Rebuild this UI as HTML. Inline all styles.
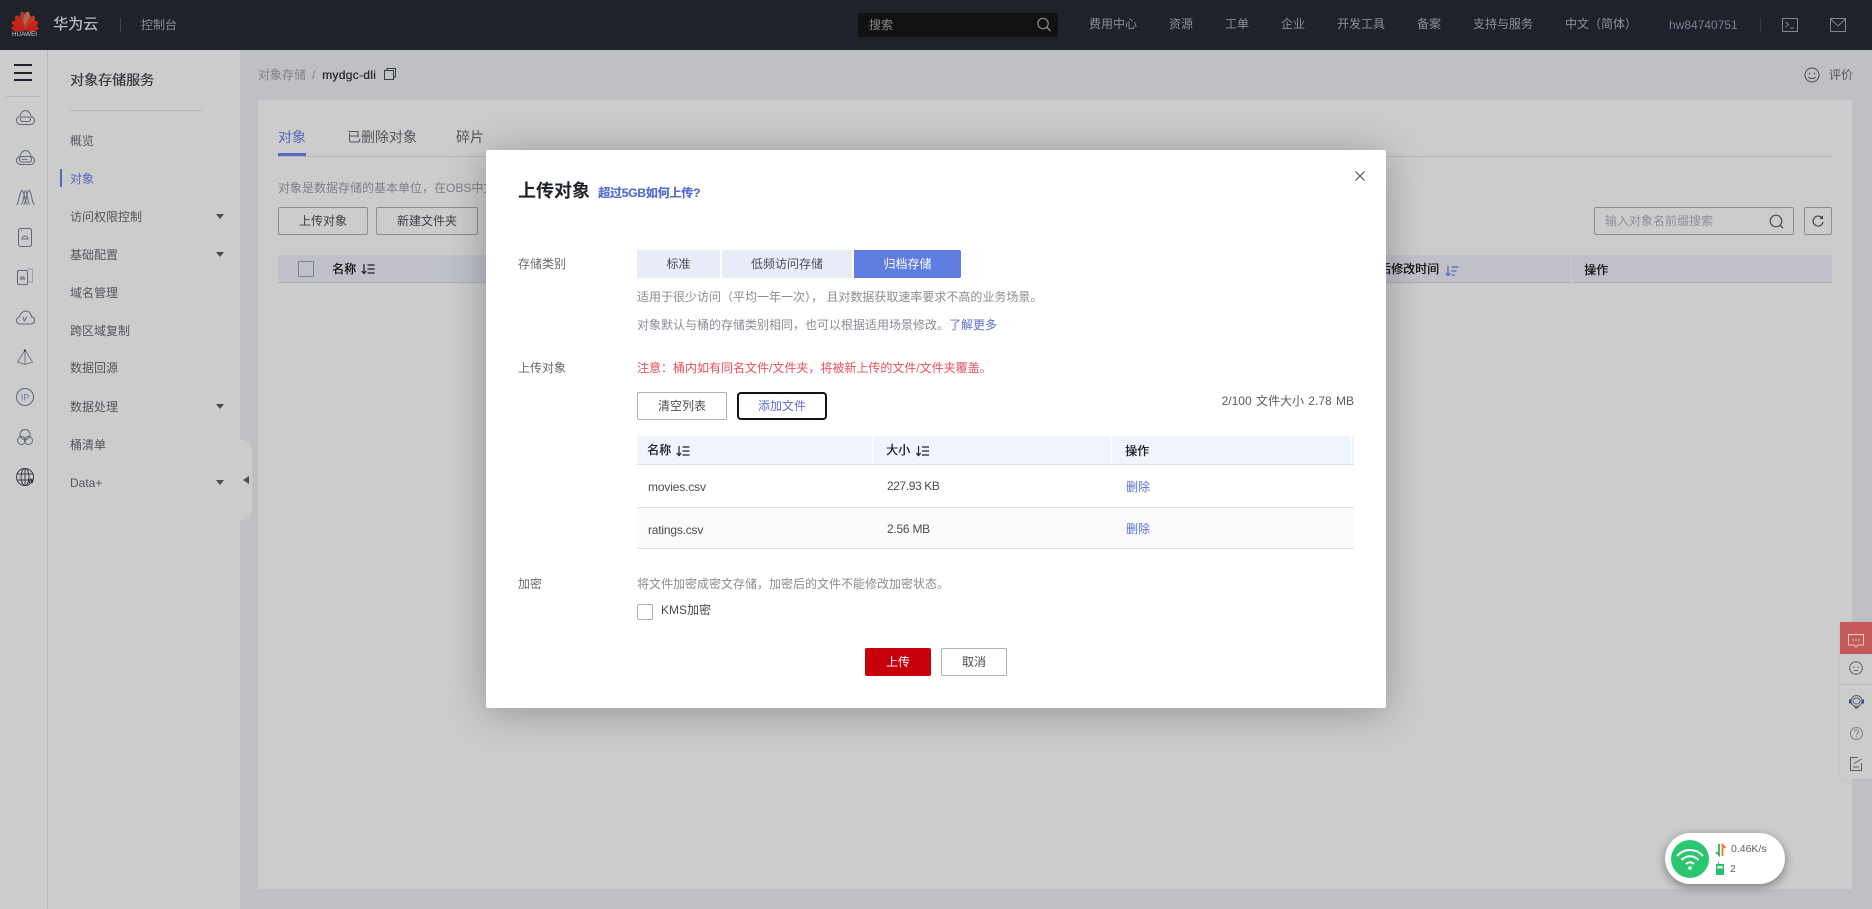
<!DOCTYPE html>
<html lang="zh-CN">
<head>
<meta charset="utf-8">
<title>对象存储服务</title>
<style>
html,body{margin:0;padding:0}
body{width:1872px;height:909px;overflow:hidden;position:relative;background:#bfc0c4;font-family:"Liberation Sans","Noto Sans CJK SC",sans-serif;font-size:12px;color:#4a4c52}
.a{position:absolute}
.t{position:absolute;line-height:20px;height:20px;white-space:nowrap}
.n{color:#8d8f96}
.m{color:#54565d}
.md{text-shadow:.35px 0 0 currentColor}
.b{position:absolute;box-sizing:border-box;border:1px solid #8c8d92;text-align:center;border-radius:2px;white-space:nowrap}
svg{position:absolute;overflow:visible}
.ic{fill:none;stroke:#62667a;stroke-width:1}
.bl{color:#5a6fd2}
</style>
</head>
<body>
<svg width="0" height="0" style="position:absolute">
<symbol id="sort" viewBox="0 0 14 12"><path d="M3 1v9M.8 8l2.2 2.6L5.200 8M6.500 2h7M6.500 6h7M6.500 10h7" fill="none" stroke="currentColor" stroke-width="1.200"/></symbol>
<symbol id="pt" viewBox="-5 -20 10 20" overflow="visible"><path d="M0 0C-3.500-5-4.500-12-1.800-18-.6-19 .6-19 1.800-18 4.500-12 3.500-5 0 0z"/></symbol>
</svg>

<!-- top bar -->
<div class="a" style="left:0;top:0;width:1872px;height:50px;background:#1f222b"></div>
<svg style="left:12px;top:10px" width="26" height="21" viewBox="0 0 26 21">
<g transform="translate(13 20)">
<path fill="#a93a2e" transform="rotate(-9) scale(1 1)" d="M0 0C-3.500-5-4.500-12-1.800-17.500-.6-19 .6-19 1.800-17.500 4.500-12 3.500-5 0 0z"/>
<path fill="#b0664f" transform="rotate(9)" d="M0 0C-3.500-5-4.500-12-1.800-17.500-.6-19 .6-19 1.800-17.500 4.500-12 3.500-5 0 0z"/>
<path fill="#c02a1e" transform="rotate(-33)" d="M0 0C-3.300-4.500-4.200-11-1.800-16-.6-17 .6-17 1.800-16 4.200-11 3.300-4.500 0 0z"/>
<path fill="#c23a26" transform="rotate(33)" d="M0 0C-3.300-4.500-4.200-11-1.800-16-.6-17 .6-17 1.800-16 4.200-11 3.300-4.500 0 0z"/>
<path fill="#c4261c" transform="rotate(-57)" d="M0 0C-3-4-3.800-10-1.800-14.500-.6-15.500 .6-15.500 1.800-14.500 3.800-10 3-4 0 0z"/>
<path fill="#c4261c" transform="rotate(57)" d="M0 0C-3-4-3.800-10-1.800-14.500-.6-15.500 .6-15.500 1.800-14.500 3.800-10 3-4 0 0z"/>
<path fill="#c0221a" transform="rotate(-82)" d="M0 0C-2.500-3.500-3.300-9-1.600-13-.6-14 .6-14 1.600-13 3.300-9 2.500-3.500 0 0z"/>
<path fill="#c0221a" transform="rotate(82)" d="M0 0C-2.500-3.500-3.300-9-1.600-13-.6-14 .6-14 1.600-13 3.300-9 2.500-3.500 0 0z"/>
</g></svg>
<div class="t" style="left:12px;top:25px;font-size:6.300px;color:#d0d1d3">HUAWEI</div>
<div class="t md" style="left:53px;top:15px;font-size:15px;color:#b9babd">华为云</div>
<div class="a" style="left:120px;top:18px;width:1px;height:14px;background:#3f424c"></div>
<div class="t n" style="left:141px;top:15px">控制台</div>
<div class="a" style="left:858px;top:13px;width:200px;height:24px;background:#111112;border-radius:2px"></div>
<div class="t" style="left:869px;top:15px;color:#8c8c8c">搜索</div>
<svg style="left:1036px;top:17px" width="16" height="15"><circle cx="7" cy="6.500" r="5.200" fill="none" stroke="#8c8c8c" stroke-width="1.200"/><path d="M11 10.500l3.500 3.500" stroke="#8c8c8c" stroke-width="1.400"/></svg>
<div class="t n" style="left:1089px;top:14px">费用中心</div>
<div class="t n" style="left:1169px;top:14px">资源</div>
<div class="t n" style="left:1225px;top:14px">工单</div>
<div class="t n" style="left:1281px;top:14px">企业</div>
<div class="t n" style="left:1337px;top:14px">开发工具</div>
<div class="t n" style="left:1417px;top:14px">备案</div>
<div class="t n" style="left:1473px;top:14px">支持与服务</div>
<div class="t n" style="left:1565px;top:14px">中文（简体）</div>
<div class="t" style="left:1669px;top:15px;color:#7a7f8f">hw84740751</div>
<div class="a" style="left:1760px;top:18px;width:1px;height:14px;background:#35383f"></div>
<svg style="left:1782px;top:18px" width="16" height="14"><rect x=".5" y=".5" width="15" height="13" fill="none" stroke="#85878e"/><path d="M3.500 4l3 2.500-3 2.500M8 10h4" fill="none" stroke="#85878e"/></svg>
<svg style="left:1830px;top:18px" width="16" height="14"><rect x=".5" y=".5" width="15" height="13" fill="none" stroke="#85878e"/><path d="M.5 1l7.500 7 7.500-7" fill="none" stroke="#85878e"/></svg>

<!-- rail + menu -->
<div class="a" style="left:0;top:50px;width:240px;height:859px;background:#cccccc"></div>
<div class="a" style="left:47px;top:50px;width:1px;height:859px;background:#bababa"></div>
<div class="a" style="left:14px;top:64px;width:18px;height:2px;background:#1f222e"></div>
<div class="a" style="left:14px;top:72px;width:18px;height:2px;background:#1f222e"></div>
<div class="a" style="left:14px;top:79px;width:18px;height:2px;background:#1f222e"></div>
<div class="a" style="left:6px;top:96px;width:35px;height:1px;background:#b8b8b8"></div>

<svg class="ic" style="left:16px;top:110px" width="19" height="15"><path d="M4.500 14.500C2 14.500.5 12.500.5 10.500.5 8.500 2 7 4 6.500 4.500 3 7 .5 9.500.5S14.500 3 15 6.500c2 .5 3.500 2 3.500 4s-1.500 4-4 4z"/><rect x="4.500" y="7" width="10" height="4.500" rx="2.200"/></svg>
<svg class="ic" style="left:16px;top:150px" width="19" height="15"><path d="M4.500 14.500C2 14.500.5 12.500.5 10.500.5 8.500 2 7 4 6.500 4.500 3 7 .5 9.500.5S14.500 3 15 6.500c2 .5 3.500 2 3.500 4s-1.500 4-4 4z"/><rect x="3.500" y="6.500" width="12" height="5.500" rx="2"/><path d="M5.500 9.300h6"/></svg>
<svg class="ic" style="left:16px;top:190px" width="19" height="15"><path d="M.5 14.500C3 14.500 3.500 .5 6 .5s3 14 5.500 14M5 14.500C7.500 14.500 8 .5 9.500 .5s2 14 4.500 14M7.500 14.500C10 14.500 10.500 .5 13 .5s3 14 5.500 14"/></svg>
<svg class="ic" style="left:18px;top:228px" width="14" height="19"><rect x=".5" y=".5" width="13" height="18" rx="2"/><path d="M4 11c0-2 1.500-3 3-3s3 1 3 3zM3 2.500h1"/></svg>
<svg class="ic" style="left:17px;top:268px" width="16" height="17"><rect x=".5" y="2.500" width="10" height="14" rx="1"/><path d="M10.500 1H15.500V14H10.500" stroke="#9a9ca6"/><path d="M3.500 11c0-1.500 1-2 2-2s2 .5 2 2z"/></svg>
<svg class="ic" style="left:16px;top:310px" width="19" height="15"><path d="M4 14C1 14 .5 11.500.5 10.500c0-2 1.500-3.500 3-3.500C4 3.500 7 1 10 1s5 2.500 5.500 6c2 0 3 1.500 3 3.500S17 14 15 14z"/><path d="M7 7l1.200 4 2.800-4.500"/></svg>
<svg class="ic" style="left:17px;top:349px;stroke:#7a7c88" width="16" height="16"><path d="M8 1L.5 13 8 15.500 15.500 13zM8 1v14.500"/><circle cx="8" cy="1.500" r="1" fill="#222" stroke="none"/></svg>
<svg class="ic" style="left:16px;top:388px" width="18" height="18"><circle cx="9" cy="9" r="8.500"/><text x="9" y="12.500" font-size="9" text-anchor="middle" stroke="none" fill="#6a7ab0" font-family="Liberation Sans">IP</text></svg>
<svg class="ic" style="left:17px;top:429px" width="16" height="16"><circle cx="8" cy="5.500" r="5"/><circle cx="4.500" cy="11.500" r="4"/><circle cx="11.500" cy="11.500" r="4"/></svg>
<svg class="ic" style="left:16px;top:468px;stroke:#3c3f4a" width="18" height="18"><circle cx="9" cy="9" r="8.500"/><ellipse cx="9" cy="9" rx="4" ry="8.500"/><path d="M.5 6h17M.5 12h17M9 .5v17"/></svg>
<div class="t" style="left:28px;top:472px;font-size:6px;color:#22242c;font-weight:700">W</div>

<div class="t md" style="left:70px;top:70px;font-size:14px;color:#3a3c42">对象存储服务</div>
<div class="a" style="left:70px;top:110px;width:132px;height:1px;background:#b8b8b8"></div>
<div class="t m" style="left:70px;top:131px">概览</div>
<div class="a" style="left:60px;top:169px;width:2px;height:18px;background:#5468bd"></div>
<div class="t" style="left:70px;top:169px;color:#5468bd">对象</div>
<div class="t m" style="left:70px;top:207px">访问权限控制</div>
<div class="t m" style="left:70px;top:245px">基础配置</div>
<div class="t m" style="left:70px;top:283px">域名管理</div>
<div class="t m" style="left:70px;top:321px">跨区域复制</div>
<div class="t m" style="left:70px;top:358px">数据回源</div>
<div class="t m" style="left:70px;top:397px">数据处理</div>
<div class="t m" style="left:70px;top:435px">桶清单</div>
<div class="t m" style="left:70px;top:473px">Data+</div>
<svg style="left:216px;top:214px" width="8" height="5"><path d="M0 0h8L4 5z" fill="#4a4c55"/></svg>
<svg style="left:216px;top:252px" width="8" height="5"><path d="M0 0h8L4 5z" fill="#4a4c55"/></svg>
<svg style="left:216px;top:404px" width="8" height="5"><path d="M0 0h8L4 5z" fill="#4a4c55"/></svg>
<svg style="left:216px;top:480px" width="8" height="5"><path d="M0 0h8L4 5z" fill="#4a4c55"/></svg>
<div class="a" style="left:240px;top:440px;width:12px;height:80px;background:#cccccc;border-radius:0 10px 10px 0"></div>
<svg style="left:243px;top:476px" width="6" height="8"><path d="M6 0v8L0 4z" fill="#4a4c55"/></svg>

<!-- breadcrumb -->
<div class="t n" style="left:258px;top:65px;color:#7e8087">对象存储</div>
<div class="t n" style="left:312px;top:65px;color:#7e8087">/</div>
<div class="t md" style="left:322px;top:65px;color:#2b2d33;letter-spacing:.3px">mydgc-dli</div>
<svg style="left:384px;top:68px" width="12" height="12"><rect x=".5" y="2.500" width="9" height="9" fill="none" stroke="#3a3c45"/><path d="M3 2.500V.5h8.500V9H9.500" fill="none" stroke="#3a3c45"/></svg>
<svg style="left:1804px;top:67px" width="16" height="16"><circle cx="8" cy="8" r="7" fill="none" stroke="#4a4c55"/><circle cx="5.500" cy="6.500" r=".8" fill="#4a4c55"/><circle cx="10.500" cy="6.500" r=".8" fill="#4a4c55"/><path d="M4.500 10c1 2 6 2 7 0" fill="none" stroke="#4a4c55"/></svg>
<div class="t" style="left:1829px;top:65px;color:#54565d">评价</div>

<!-- content card -->
<div class="a" style="left:258px;top:100px;width:1594px;height:789px;background:#cccccc"></div>
<div class="t" style="left:278px;top:127px;font-size:14px;color:#5468bd">对象</div>
<div class="t m" style="left:347px;top:127px;font-size:14px">已删除对象</div>
<div class="t m" style="left:456px;top:127px;font-size:14px">碎片</div>
<div class="a" style="left:278px;top:156px;width:1554px;height:1px;background:#b5b6ba"></div>
<div class="a" style="left:278px;top:153px;width:28px;height:3px;background:#5468bd"></div>
<div class="t" style="left:278px;top:178px;color:#7e8087">对象是数据存储的基本单位，在OBS中文</div>
<div class="b" style="left:278px;top:207px;width:90px;height:28px;line-height:27px;color:#3d3f46">上传对象</div>
<div class="b" style="left:376px;top:207px;width:102px;height:28px;line-height:27px;color:#3d3f46">新建文件夹</div>
<div class="a" style="left:278px;top:255px;width:1554px;height:28px;background:#bfc0c8;border-bottom:1px solid #aeafb4;box-sizing:border-box"></div>
<div class="a" style="left:298px;top:261px;width:16px;height:16px;border:1px solid #7e8087;box-sizing:border-box;border-radius:1px"></div>
<div class="t md" style="left:332px;top:259px;color:#16171b">名称</div>
<svg style="left:361px;top:263px;color:#1f2026" width="14" height="12"><use href="#sort"/></svg>
<div class="t md" style="left:1367px;top:259px;color:#16171b">最后修改时间</div>
<svg style="left:1445px;top:265px;color:#5468bd" width="14" height="12"><path d="M3 1v9M.8 8L3 10.600 5.200 8M6.500 2h7M6.500 6h5M6.500 10h3" fill="none" stroke="currentColor" stroke-width="1.200"/></svg>
<div class="a" style="left:1571px;top:255px;width:1px;height:28px;background:#cccdd2"></div>
<div class="t md" style="left:1584px;top:260px;color:#16171b">操作</div>
<div class="b" style="left:1594px;top:207px;width:200px;height:28px;line-height:26px;text-align:left;padding-left:10px;color:#8d8f96">输入对象名前缀搜索</div>
<svg style="left:1769px;top:214px" width="15" height="15"><circle cx="7" cy="7" r="5.800" fill="none" stroke="#4a4c55" stroke-width="1.200"/><path d="M11 11l3 3" stroke="#4a4c55" stroke-width="1.300"/></svg>
<div class="b" style="left:1804px;top:207px;width:28px;height:28px"></div>
<svg style="left:1812px;top:215px" width="12" height="12"><path d="M10 3A5 5 0 1 0 11 7" fill="none" stroke="#3a3c45" stroke-width="1.100"/><path d="M11 .5v3.500H7.500" fill="#3a3c45" stroke="none"/></svg>

<!-- right float -->
<div class="a" style="left:1840px;top:622px;width:32px;height:157px;background:#cccccc;box-shadow:0 0 3px rgba(0,0,0,.06)"></div>
<div class="a" style="left:1840px;top:622px;width:32px;height:32px;background:#c45a57"></div>
<svg style="left:1848px;top:634px" width="16" height="14"><path d="M.5.500h15v10.500h-5.500l-2 2-2-2H.5z" fill="none" stroke="#efcfc8"/><path d="M4 6h2M7 6h2M10 6h2" stroke="#f0d5cf"/></svg>
<svg style="left:1849px;top:661px" width="15" height="14"><circle cx="7" cy="7" r="6.300" fill="none" stroke="#5a5f70"/><circle cx="4.800" cy="6" r=".7" fill="#5a5f70"/><circle cx="9.200" cy="6" r=".7" fill="#5a5f70"/><path d="M5 9.500h4" stroke="#5a5f70"/></svg>
<div class="a" style="left:1841px;top:684px;width:30px;height:1px;background:#b8b8b8"></div>
<svg style="left:1849px;top:695px" width="15" height="14"><circle cx="7.500" cy="6" r="5.500" fill="none" stroke="#5a5f70"/><ellipse cx="7.500" cy="6" rx="3.500" ry="3" fill="none" stroke="#5a5f70"/><rect x="0" y="4.500" width="2" height="4" fill="#3a4a80"/><rect x="13" y="4.500" width="2" height="4" fill="#3a4a80"/><path d="M5 11.500h5l-1 2H6z" fill="#5a5f70"/></svg>
<svg style="left:1850px;top:727px" width="13" height="13"><circle cx="6.500" cy="6.500" r="6" fill="none" stroke="#7a7d88"/><path d="M4.500 5c0-3 4-3 4 0 0 1.500-2 1.500-2 3.200M6.500 9.500v1" fill="none" stroke="#7a7d88"/></svg>
<svg style="left:1850px;top:757px" width="13" height="14"><path d="M8 .5H.5v13h11V6" fill="none" stroke="#5a5f70"/><path d="M4 6.500L11.500 2M3 10h6" fill="none" stroke="#5a5f70"/></svg>

<!-- wifi widget -->
<div class="a" style="left:1665px;top:833px;width:120px;height:51px;background:#fff;border-radius:26px;box-shadow:0 3px 10px rgba(0,0,0,.4)"></div>
<div class="a" style="left:1671px;top:840px;width:38px;height:38px;background:#2bc770;border-radius:50%"></div>
<svg style="left:1675px;top:846px" width="30" height="26"><path d="M2 10C9 2 21 2 28 10M6.500 14c5-5 12-5 17 0M11 18c2.500-2.300 5.500-2.300 8 0" fill="none" stroke="#fff" stroke-width="2"/><circle cx="15" cy="22" r="1.800" fill="#fff"/></svg>
<svg style="left:1715px;top:844px" width="11" height="12"><path d="M4 0v11L1 8" fill="none" stroke="#1fb866" stroke-width="1.800"/><path d="M7.500 12V1l3 3" fill="none" stroke="#ee7a18" stroke-width="1.800"/></svg>
<div class="t" style="left:1731px;top:839px;font-size:10.500px;color:#5a5f6a">0.46K/s</div>
<svg style="left:1716px;top:862px" width="8" height="13"><path d="M2 0h1v2h5v11H0V2h2z" fill="#1fc36c"/><rect x="1.500" y="4" width="5" height="2.500" fill="#fff"/></svg>
<div class="t" style="left:1730px;top:859px;font-size:10.500px;color:#5a5f6a">2</div>

<!-- modal -->
<div class="a" style="left:486px;top:150px;width:900px;height:558px;background:#fff;border-radius:2px;box-shadow:0 4px 40px rgba(0,0,0,.28)"></div>
<div class="t" style="left:518px;top:181px;font-size:18px;color:#1f2229;font-weight:700">上传对象</div>
<div class="t md" style="left:598px;top:183px;color:#5a6fd2;font-weight:700;letter-spacing:-.2px">超过5GB如何上传?</div>
<svg style="left:1355px;top:171px" width="10" height="10"><path d="M.5.500l9 9M9.500.500l-9 9" stroke="#4d5260" stroke-width="1.200"/></svg>

<div class="t" style="left:518px;top:254px;color:#666970">存储类别</div>
<div class="a" style="left:637px;top:250px;width:83px;height:28px;line-height:28px;text-align:center;background:#e9edf9;color:#4a4c52">标准</div>
<div class="a" style="left:722px;top:250px;width:130px;height:28px;line-height:28px;text-align:center;background:#e9edf9;color:#4a4c52">低频访问存储</div>
<div class="a" style="left:854px;top:250px;width:107px;height:28px;line-height:28px;text-align:center;background:#5f7ce0;color:#fff;border-radius:0 2px 2px 0">归档存储</div>
<div class="t" style="left:637px;top:287px;color:#8a8c92">适用于很少访问（平均一年一次）， 且对数据获取速率要求不高的业务场景。</div>
<div class="t" style="left:637px;top:315px;color:#8a8c92">对象默认与桶的存储类别相同，也可以根据适用场景修改。<span class="bl">了解更多</span></div>

<div class="t" style="left:518px;top:358px;color:#666970">上传对象</div>
<div class="t" style="left:637px;top:358px;color:#e8505b">注意：桶内如有同名文件/文件夹，将被新上传的文件/文件夹覆盖。</div>
<div class="b" style="left:637px;top:392px;width:90px;height:28px;line-height:27px;border-color:#adb0b8;color:#4a4c52">清空列表</div>
<div class="b" style="left:737px;top:392px;width:90px;height:28px;line-height:25px;border:2px solid #111;border-radius:4px;color:#5a6fd2">添加文件</div>
<div class="t" style="left:1202px;top:391px;width:152px;text-align:right;color:#575d6c;word-spacing:1px">2/100 文件大小 2.78 MB</div>

<div class="a" style="left:637px;top:436px;width:717px;height:29px;background:#f0f4fb;border-bottom:1px solid #dfe1e6;box-sizing:border-box"></div>
<div class="a" style="left:872px;top:436px;width:1px;height:28px;background:#fff"></div>
<div class="a" style="left:1111px;top:436px;width:1px;height:28px;background:#fff"></div>
<div class="a" style="left:1351px;top:436px;width:1px;height:28px;background:#fff"></div>
<div class="t md" style="left:647px;top:440px;color:#1f2229">名称</div>
<svg style="left:675px;top:445px;color:#1f2229" width="16" height="12"><use href="#sort"/></svg>
<div class="t md" style="left:886px;top:440px;color:#1f2229">大小</div>
<svg style="left:915px;top:445px;color:#1f2229" width="15" height="12"><use href="#sort"/></svg>
<div class="t md" style="left:1125px;top:441px;color:#1f2229">操作</div>

<div class="a" style="left:637px;top:507px;width:717px;height:1px;background:#dfe1e6"></div>
<div class="t" style="left:648px;top:477px;color:#4a4c52;letter-spacing:-.15px">movies.csv</div>
<div class="t" style="left:887px;top:476px;color:#4a4c52;letter-spacing:-.4px">227.93 KB</div>
<div class="t bl" style="left:1126px;top:477px">删除</div>
<div class="a" style="left:637px;top:508px;width:717px;height:40px;background:#fbfbfb;border-bottom:1px solid #dfe1e6"></div>
<div class="t" style="left:648px;top:520px;color:#4a4c52;letter-spacing:-.2px">ratings.csv</div>
<div class="t" style="left:887px;top:519px;color:#4a4c52;letter-spacing:-.25px">2.56 MB</div>
<div class="t bl" style="left:1126px;top:519px">删除</div>

<div class="t" style="left:518px;top:574px;color:#666970">加密</div>
<div class="t" style="left:637px;top:574px;color:#8a8c92">将文件加密成密文存储，加密后的文件不能修改加密状态。</div>
<div class="a" style="left:637px;top:604px;width:16px;height:16px;border:1px solid #adb0b8;box-sizing:border-box;border-radius:2px"></div>
<div class="t" style="left:661px;top:600px;color:#4a4c52">KMS加密</div>
<div class="a" style="left:865px;top:648px;width:66px;height:28px;line-height:28px;text-align:center;background:#c7000b;color:#fff;border-radius:2px">上传</div>
<div class="b" style="left:941px;top:648px;width:66px;height:28px;line-height:26px;border-color:#adb0b8;color:#4a4c52">取消</div>
</body>
</html>
